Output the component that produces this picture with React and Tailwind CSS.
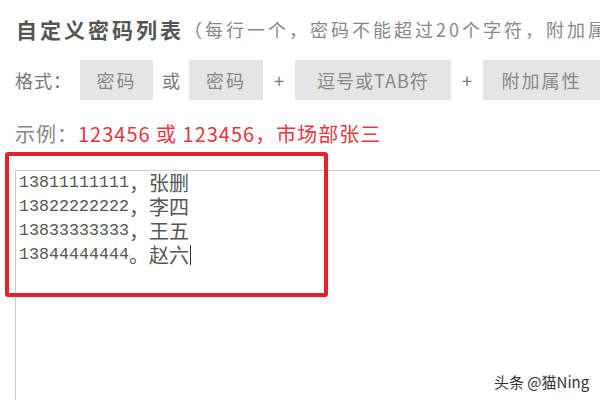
export default function App() {
  const cjk = { fontFamily: '"Microsoft YaHei", "Noto Sans CJK SC", sans-serif' };
  const lines = [
    ["13811111111", "，张删"],
    ["13822222222", "，李四"],
    ["13833333333", "，王五"],
    ["13844444444", "。赵六"],
  ];

  return (
    <main
      className="relative h-[400px] w-[600px] overflow-hidden bg-white text-[#666]"
      style={cjk}
    >
      <section className="flex h-[44px] items-end whitespace-nowrap pl-[16px]">
        <h1 className="text-[21px] leading-[30px] font-bold tracking-[3px] text-[#555]">
          自定义密码列表
        </h1>
        <span className="text-[18px] leading-[30px] tracking-[3px] text-[#888]">
          （每行一个，密码不能超过20个字符，附加属性
        </span>
      </section>

      <section className="mt-[16px] flex h-[40px] items-center whitespace-nowrap pl-[15px] text-[18px] text-[#777]">
        <span className="tracking-[1px]">格式：</span>
        <span className="ml-[8px] flex h-[40px] w-[73px] items-center justify-center bg-[#e5e5e5] tracking-[2px] text-[#888]">
          密码
        </span>
        <span className="mx-[9px]">或</span>
        <span className="flex h-[40px] w-[74px] items-center justify-center bg-[#e5e5e5] tracking-[2px] text-[#888]">
          密码
        </span>
        <span className="mx-[11px]">+</span>
        <span className="flex h-[40px] w-[156px] items-center justify-center bg-[#e5e5e5] tracking-[1px] text-[#888]">
          逗号或TAB符
        </span>
        <span className="mx-[11px]">+</span>
        <span className="flex h-[40px] w-[117px] items-center justify-center bg-[#e5e5e5] tracking-[2px] text-[#888]">
          附加属性
        </span>
      </section>

      <p className="mt-[20px] whitespace-nowrap pl-[15px] text-[20px] leading-[28px] tracking-[1px] text-[#888]">
        示例：
        <span className="text-[#e8383d]">123456 或 123456，市场部张三</span>
      </p>

      <section className="mt-[22px] ml-[15px] h-[300px] border-l border-t border-[#ccc] pl-[3px]">
        {lines.map(([num, name], i) => (
          <div key={i} className="flex h-[24px] items-center whitespace-nowrap text-[#555]">
            <span
              className="text-[16.67px] leading-[24px]"
              style={{ fontFamily: '"Liberation Mono", monospace' }}
            >
              {num}
            </span>
            <span className="text-[20px] leading-[24px]">{name}</span>
            {i === lines.length - 1 && (
              <span className="ml-[1px] inline-block h-[20px] w-px bg-[#333]" />
            )}
          </div>
        ))}
      </section>

      <div className="pointer-events-none absolute left-[5px] top-[152px] h-[145px] w-[323px] rounded-[3px] border-[4px] border-[#e8202a]" />

      <span className="absolute left-[494px] top-[371px] text-[15px] text-[#333]">
        头条 @猫Ning
      </span>
    </main>
  );
}
